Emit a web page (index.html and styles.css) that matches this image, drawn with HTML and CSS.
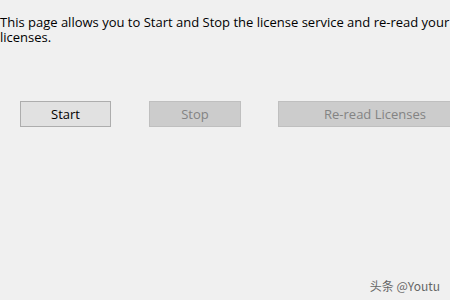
FILE: index.html
```html
<!DOCTYPE html>
<html lang="en">
<head>
    <meta charset="UTF-8">
    <title>License Service</title>
    <link rel="stylesheet" href="styles.css">
</head>
<body>
    <div class="page">
        <p class="intro">This page allows you to Start and Stop the license service and re-read your licenses.</p>
        <div class="actions">
            <button class="btn btn_start">Start</button>
            <button class="btn btn_stop" disabled>Stop</button>
            <button class="btn btn_reread" disabled>Re-read Licenses</button>
        </div>
    </div>
    <div class="mark">头条 @Youtu</div>
</body>
</html>
```

FILE: styles.css
```css
* {margin: 0; padding: 0;}

body
{
    width: 450px;
    height: 300px;
    overflow: hidden;
    background: #f0f0f0;
    font-family: "Open Sans", "Noto Sans", sans-serif;
    font-size: 13px;
    color: #000;
    position: relative;
}

.intro
{
    padding: 15px 0 0 0;
    line-height: 15px;
    width: 452px;
}

.actions
{
    display: flex;
    padding: 56px 0 0 20px;
    width: 450px;
    box-sizing: border-box;
    overflow: hidden;
}

.btn
{
    flex: none;
    height: 26px;
    box-sizing: border-box;
    border: 1px solid #adadad;
    background: #e1e1e1;
    font-family: inherit;
    font-size: 13px;
    color: #000;
}

.btn_start
{
    width: 91px;
}

.btn_stop
{
    width: 92px;
    margin-left: 38px;
}

.btn_reread
{
    width: 194px;
    margin-left: 37px;
}

.btn:disabled
{
    background: #cccccc;
    border-color: #bfbfbf;
    color: #838383;
}

.mark
{
    position: absolute;
    right: 10px;
    bottom: 6px;
    font-family: "Noto Sans CJK SC", sans-serif;
    font-size: 12px;
    color: #666;
}
```
